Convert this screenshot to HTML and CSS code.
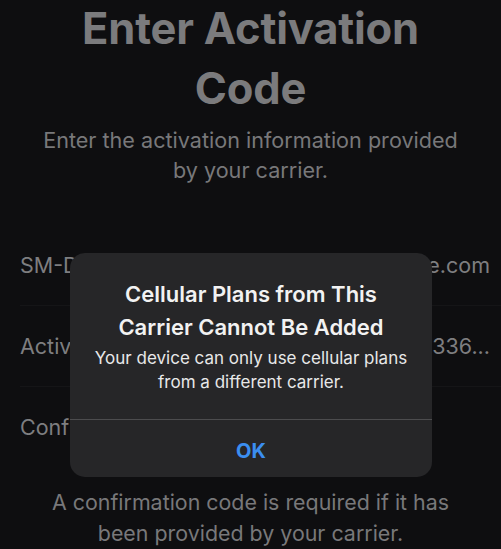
FILE: index.html
```html
<!DOCTYPE html>
<html>
<head>
<meta charset="utf-8">
<link rel="stylesheet" href="styles.css">
</head>
<body>
<div class="screen">
  <h1 class="title">Enter Activation<br>Code</h1>
  <p class="subtitle">Enter the activation information provided<br>by your carrier.</p>
  <div class="rows">
    <div class="row"><span class="label">SM-DP+ Address</span><span class="value">consumer.example.com</span></div>
    <div class="row"><span class="label">Activation Code</span><span class="value">LPA:1$K2-9A7F-1C336...</span></div>
    <div class="row"><span class="label">Confirmation Code</span><span class="value"></span></div>
  </div>
  <p class="footnote">A confirmation code is required if it has<br>been provided by your carrier.</p>

  <div class="alert">
    <div class="alert-body">
      <div class="alert-title">Cellular Plans from This<br>Carrier Cannot Be Added</div>
      <div class="alert-msg">Your device can only use cellular plans<br>from a different carrier.</div>
    </div>
    <div class="alert-btn">OK</div>
  </div>
</div>
</body>
</html>
```

FILE: styles.css
```css
html, body {
  margin: 0;
  padding: 0;
  background: #0e0e10;
}
body {
  font-family: Inter, "Liberation Sans", sans-serif;
  width: 501px;
  height: 549px;
  overflow: hidden;
}
.screen {
  position: relative;
  width: 501px;
  height: 549px;
}
.title {
  margin: -2px 0 0;
  font-size: 43.5px;
  line-height: 60px;
  font-weight: 700;
  color: #7b7b7d;
  text-align: center;
  letter-spacing: -0.2px;
}
.subtitle {
  margin: 7px 0 0;
  font-size: 21.6px;
  line-height: 30px;
  color: #78787a;
  text-align: center;
}
.rows {
  margin-top: 40px;
  padding-left: 20px;
}
.row {
  display: flex;
  justify-content: space-between;
  align-items: center;
  gap: 12px;
  padding: 25px 11px 25px 0;
  line-height: 30px;
  font-size: 21.5px;
  border-bottom: 1px solid #151517;
}
.row:last-child {
  border-bottom: none;
}
.label {
  color: #7e7e80;
  white-space: nowrap;
}
.value {
  color: #7e7e80;
  white-space: nowrap;
  overflow: hidden;
}
.footnote {
  margin: 20px 0 0;
  font-size: 21.4px;
  line-height: 31px;
  color: #78787a;
  text-align: center;
}
.alert {
  position: absolute;
  left: 70px;
  top: 255px;
  width: 362px;
  height: 224px;
  background: #262628;
  border-radius: 15px;
  display: flex;
  flex-direction: column;
  overflow: hidden;
}
.alert-body {
  flex: 1;
  padding-top: 25px;
  text-align: center;
}
.alert-title {
  font-size: 22px;
  line-height: 33px;
  font-weight: 600;
  color: #f2f2f2;
}
.alert-msg {
  margin-top: 2px;
  font-size: 17px;
  line-height: 24px;
  color: #e8e8e8;
}
.alert-btn {
  height: 58px;
  border-top: 1px solid #4c4c4e;
  display: flex;
  align-items: center;
  justify-content: center;
  padding-top: 4px;
  box-sizing: border-box;
  font-size: 20px;
  font-weight: 700;
  color: #3b8ef0;
}
```
